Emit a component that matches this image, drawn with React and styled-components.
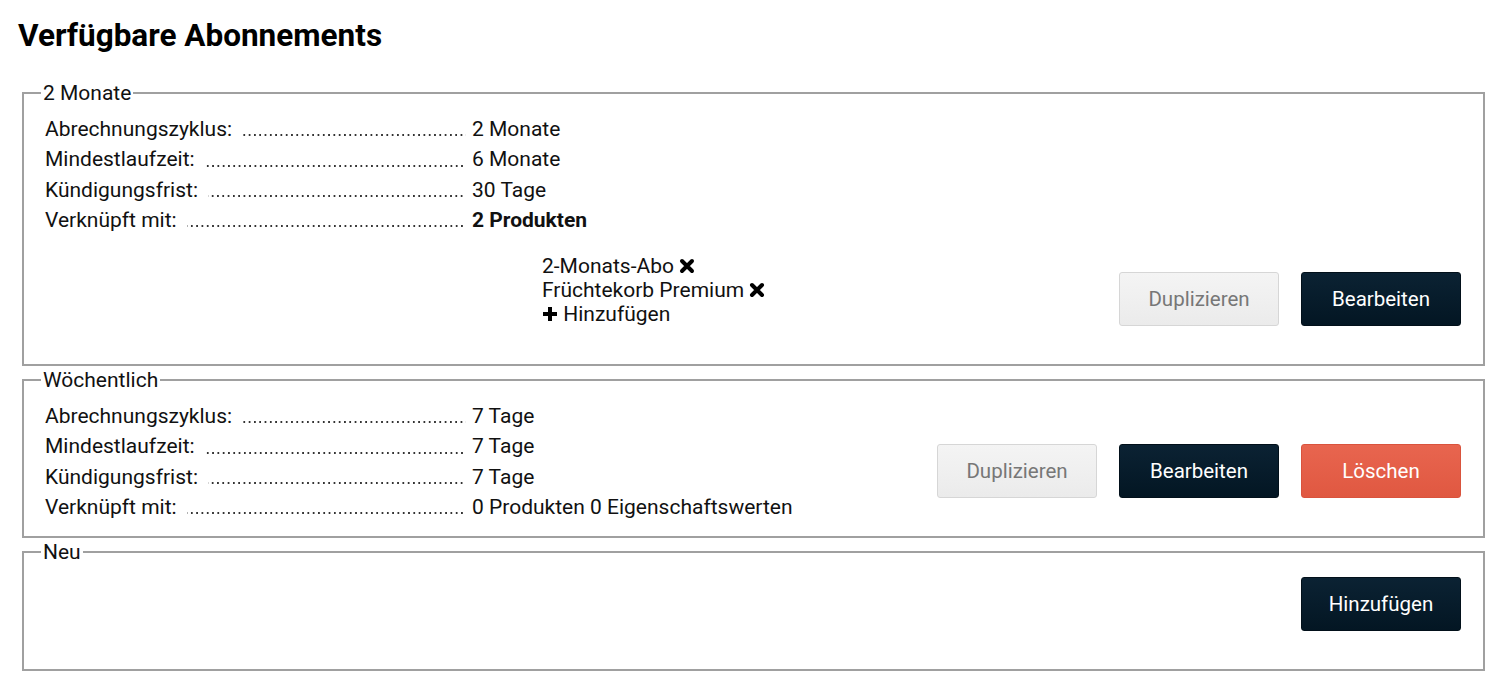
import React from 'react'
import styled, { createGlobalStyle } from 'styled-components'

const GlobalStyle = createGlobalStyle`
    body {
        margin: 0;
        background: #fff;
        font-family: Roboto, "Liberation Sans", sans-serif;
        color: #111;
    }
`

const plans = [
    {
        name: '2 Monate',
        rows: [
            ['Abrechnungszyklus:', '2 Monate'],
            ['Mindestlaufzeit:', '6 Monate'],
            ['Kündigungsfrist:', '30 Tage'],
            ['Verknüpft mit:', '2 Produkten', true],
        ],
        products: ['2-Monats-Abo', 'Früchtekorb Premium'],
        canDelete: false,
    },
    {
        name: 'Wöchentlich',
        rows: [
            ['Abrechnungszyklus:', '7 Tage'],
            ['Mindestlaufzeit:', '7 Tage'],
            ['Kündigungsfrist:', '7 Tage'],
            ['Verknüpft mit:', '0 Produkten 0 Eigenschaftswerten'],
        ],
        products: null,
        canDelete: true,
    },
]

const RemoveIcon = () => (
    <Icon viewBox="0 0 16 16">
        <path d="M3 3L13 13M13 3L3 13" stroke="#000" strokeWidth="4" strokeLinecap="round" />
    </Icon>
)

const AddIcon = () => (
    <Icon viewBox="0 0 16 16">
        <path d="M8 1V15M1 8H15" stroke="#000" strokeWidth="4" />
    </Icon>
)

function App() {
    return (
        <Page>
            <GlobalStyle />
            <Title>Verfügbare Abonnements</Title>
            {plans.map((plan) => (
                <Box key={plan.name}>
                    <Legend>{plan.name}</Legend>
                    <Content>
                        <Info>
                            {plan.rows.map(([label, value, strong]) => (
                                <Row key={label}>
                                    <LabelCell>
                                        <span>{label}</span>
                                        <Dots />
                                    </LabelCell>
                                    <Value $strong={strong}>{value}</Value>
                                </Row>
                            ))}
                            {plan.products && (
                                <Products>
                                    {plan.products.map((p) => (
                                        <li key={p}>
                                            {p} <RemoveIcon />
                                        </li>
                                    ))}
                                    <li>
                                        <AddIcon /> Hinzufügen
                                    </li>
                                </Products>
                            )}
                        </Info>
                        <Actions>
                            <Button $variant="light">Duplizieren</Button>
                            <Button>Bearbeiten</Button>
                            {plan.canDelete && <Button $variant="danger">Löschen</Button>}
                        </Actions>
                    </Content>
                </Box>
            ))}
            <Box>
                <Legend>Neu</Legend>
                <Content>
                    <Info />
                    <Actions>
                        <Button>Hinzufügen</Button>
                    </Actions>
                </Content>
            </Box>
        </Page>
    )
}

const Page = styled.div`
    padding: 0 22px 16px 22px;
`
const Title = styled.h1`
    margin: 18px 0 27px -4px;
    font-size: 31.5px;
    line-height: 36px;
    font-weight: 700;
    color: #000;
`
const Box = styled.fieldset`
    margin: 0 0 2px 0;
    padding: 9px 22px 14px 17px;
    border: 2px solid #a0a0a0;
    min-width: 0;
`
const Legend = styled.legend`
    padding: 0 2px;
    font-size: 21px;
    line-height: 24px;
`
const Content = styled.div`
    display: flex;
    justify-content: space-between;
    padding-left: 4px;
`
const Info = styled.div`
    display: flex;
    flex-direction: column;
`
const Row = styled.div`
    display: flex;
    font-size: 21px;
    line-height: 30.3px;
    white-space: nowrap;
`
const LabelCell = styled.div`
    display: flex;
    width: 427px;
    gap: 10px;
    padding-right: 6px;
    box-sizing: border-box;
`
const Dots = styled.span`
    flex: 1;
    align-self: flex-end;
    height: 2px;
    margin-bottom: 8px;
    background-image: linear-gradient(to right, #333 0 2px, transparent 2px);
    background-size: 5.3px 2px;
    background-repeat: repeat-x;
    background-position: right bottom;
`
const Value = styled.span`
    font-weight: ${(p) => (p.$strong ? 700 : 400)};
`
const Products = styled.ul`
    list-style: none;
    margin: 19px 0 24px 497px;
    padding: 0;
    font-size: 21px;
    line-height: 24px;
`
const Icon = styled.svg`
    width: 16px;
    height: 16px;
    vertical-align: -1px;
`
const Actions = styled.div`
    display: flex;
    gap: 22px;
    align-self: flex-end;
    margin: 4px 0 24px 0;
`
const variants = {
    dark: `
        background: linear-gradient(#0b2233, #031623);
        border-color: #02101a;
        color: #fff;
    `,
    light: `
        background: linear-gradient(#f4f4f4, #ebebeb);
        border-color: #d6d6d6;
        color: #777;
    `,
    danger: `
        background: linear-gradient(#e8654f, #e05841);
        border-color: #d9533d;
        color: #fff;
    `,
}
const Button = styled.button`
    width: 160px;
    height: 54px;
    border: 1px solid;
    border-radius: 3px;
    font-family: Roboto, "Liberation Sans", sans-serif;
    font-size: 20.5px;
    cursor: pointer;
    ${(p) => variants[p.$variant || 'dark']}
`

export default App
